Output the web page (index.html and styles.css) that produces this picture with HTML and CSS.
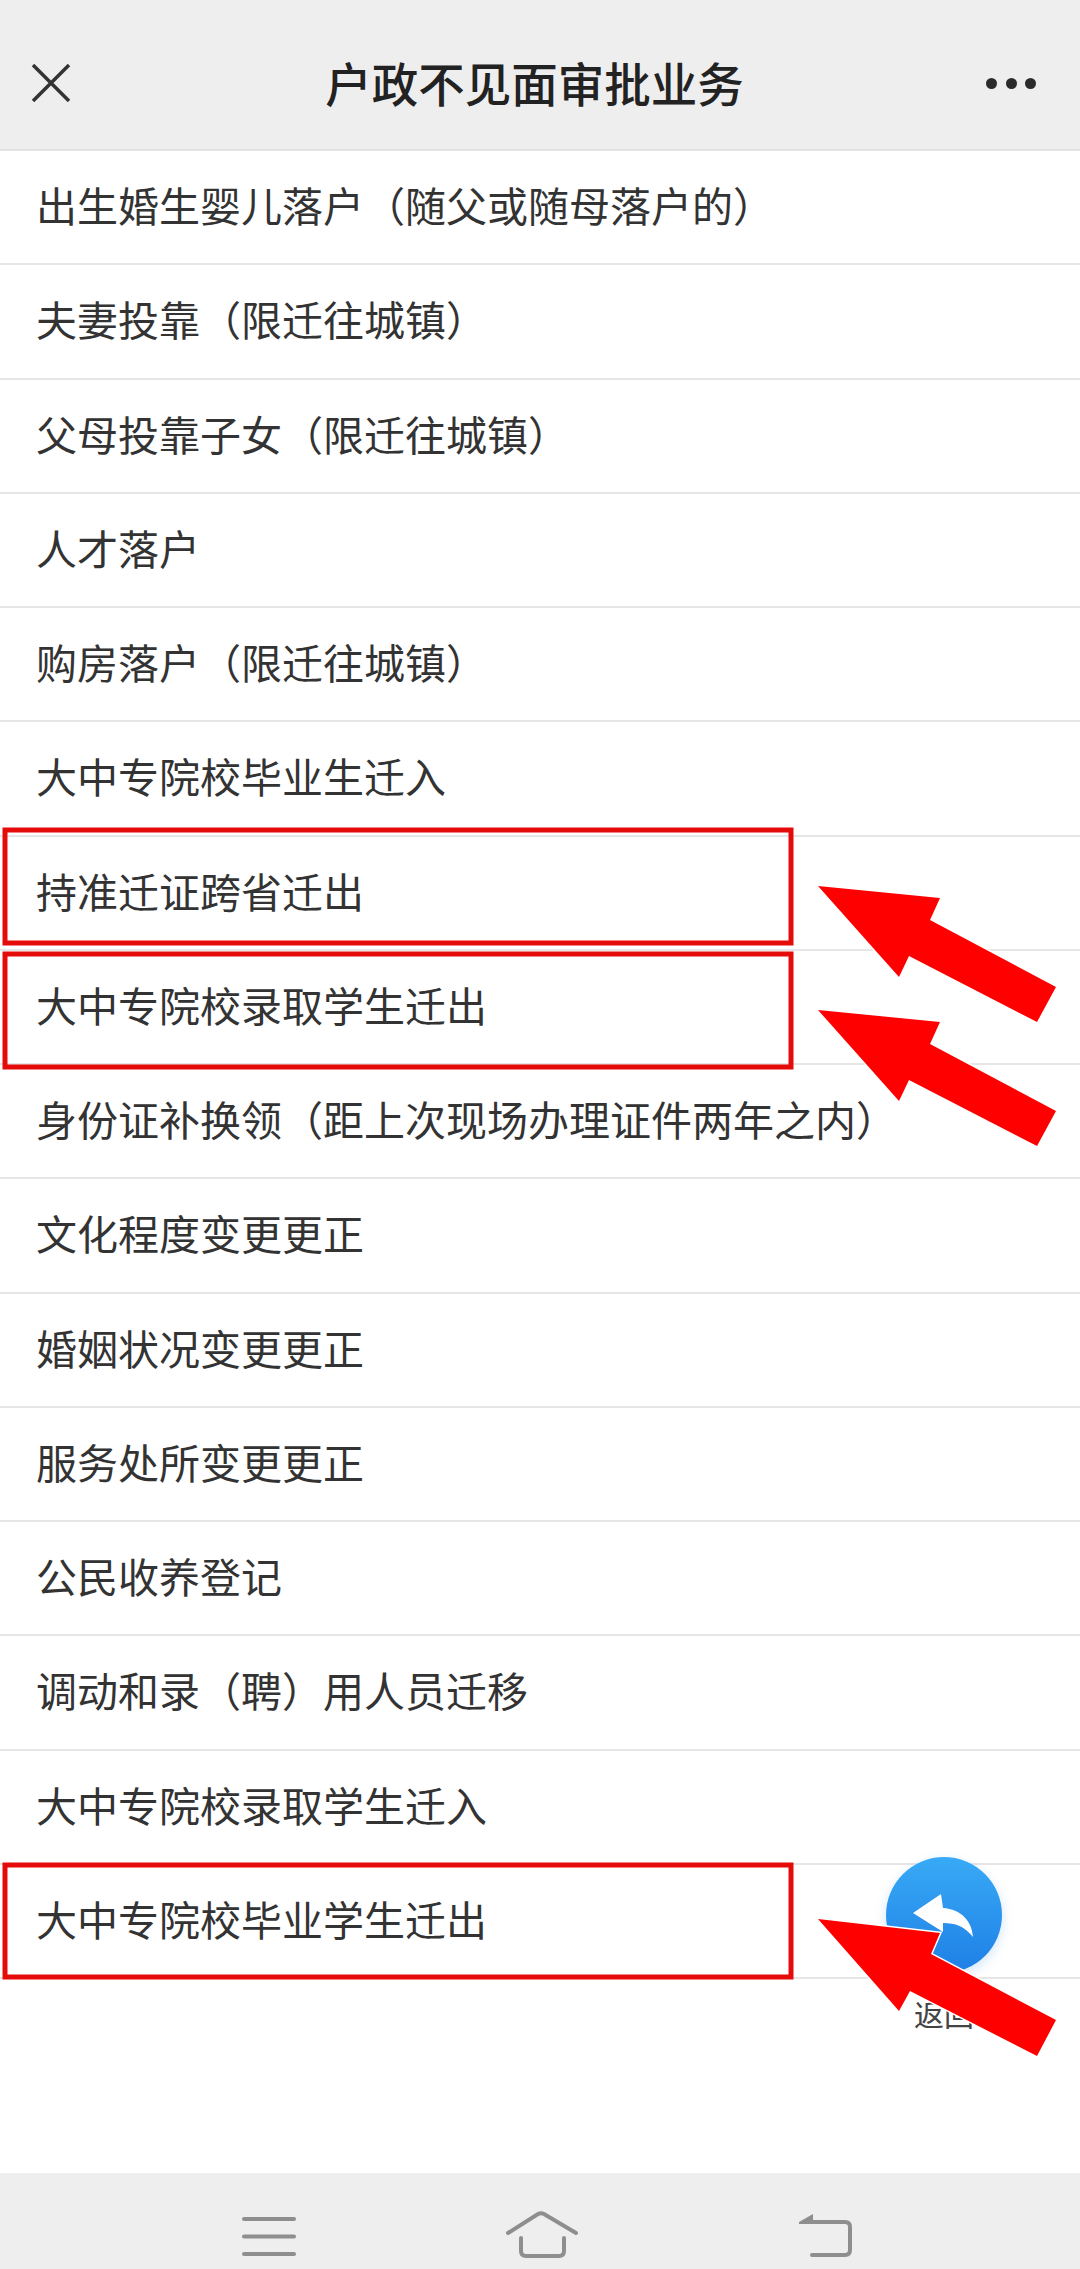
FILE: index.html
```html
<!DOCTYPE html>
<html lang="zh-CN">
<head>
<meta charset="utf-8">
<title>户政不见面审批业务</title>
<link rel="stylesheet" href="styles.css">
</head>
<body>
    <div class="page">
        <div class="topbar">
            <svg class="close-icon" width="40" height="38" viewBox="0 0 40 38">
                <path d="M2 1 L38 37 M38 1 L2 37" />
            </svg>
            <h1 class="title">户政不见面审批业务</h1>
            <div class="more"><span></span><span></span><span></span></div>
        </div>

        <div class="list">
            <div class="row">出生婚生婴儿落户（随父或随母落户的）</div>
            <div class="row">夫妻投靠（限迁往城镇）</div>
            <div class="row">父母投靠子女（限迁往城镇）</div>
            <div class="row">人才落户</div>
            <div class="row">购房落户（限迁往城镇）</div>
            <div class="row">大中专院校毕业生迁入</div>
            <div class="row">持准迁证跨省迁出</div>
            <div class="row">大中专院校录取学生迁出</div>
            <div class="row">身份证补换领（距上次现场办理证件两年之内）</div>
            <div class="row">文化程度变更更正</div>
            <div class="row">婚姻状况变更更正</div>
            <div class="row">服务处所变更更正</div>
            <div class="row">公民收养登记</div>
            <div class="row">调动和录（聘）用人员迁移</div>
            <div class="row">大中专院校录取学生迁入</div>
            <div class="row">大中专院校毕业学生迁出</div>
        </div>

        <div class="bottombar">
            <svg class="nav-icon" width="56" height="44" viewBox="0 0 56 44">
                <path d="M3 5 H53 M3 22.500 H53 M3 40 H53" />
            </svg>
            <svg class="nav-icon nav-home" width="76" height="50" viewBox="0 0 76 50">
                <path d="M4 22 L34 3 Q37 1.500 40 3 L72 22" />
                <path d="M17 27 V40 Q17 45 22 45 H55 Q60 45 60 40 V27" />
            </svg>
            <svg class="nav-icon nav-back" width="60" height="46" viewBox="0 0 60 46">
                <path class="fill" d="M2 9 L16 1 V11 H2 Z" />
                <path d="M8 9 H48 Q53 9 53 14 V37 Q53 42 48 42 H15" />
            </svg>
        </div>

        <div class="fab">
            <div class="fab-circle">
                <svg width="116" height="116" viewBox="0 0 116 116">
                    <path d="M27 56 L55 37 L57 51 C75 52 86 64 87 80 C78 69 70 66 57 66 L57 75 Z" />
                </svg>
            </div>
            <div class="fab-label">返回</div>
        </div>

        <!-- red markup drawn on top of the screenshot -->
        <svg class="markup" width="1080" height="2269" viewBox="0 0 1080 2269">
            <rect class="box" x="5" y="830" width="786" height="113" />
            <rect class="box" x="5" y="954" width="786" height="113" />
            <rect class="box" x="5" y="1865" width="786" height="112" />
            <polygon class="arrow" points="818,886 940,898 930,920 1056,987 1037,1022 909,956 899,977" />
            <polygon class="arrow" points="818,1010 940,1022 930,1044 1056,1111 1037,1146 909,1080 899,1101" />
            <polygon class="arrow" points="818,1919 940,1933 931,1954 1056,2020 1037,2056 910,1991 899,2011" />
        </svg>
    </div>
</body>
</html>
```

FILE: styles.css
```css
* {
    box-sizing: border-box;
}

body {
    margin: 0;
    background-color: #fff;
    font-family: "Noto Sans CJK SC", "Liberation Sans", sans-serif;
    color: #333;
}

.page {
    position: relative;
    width: 1080px;
    height: 2269px;
    display: flex;
    flex-direction: column;
    overflow: hidden;
}

.topbar {
    height: 151px;
    flex: none;
    display: flex;
    align-items: center;
    justify-content: space-between;
    padding: 15px 44px 0 31px;
    background-color: #eee;
    border-bottom: 2px solid #e2e2e2;
}

.close-icon {
    margin-top: 2px;
}

.close-icon path {
    fill: none;
    stroke: #333;
    stroke-width: 3.5;
}

.title {
    margin: 0 0 0 12px;
    font-size: 46.500px;
    font-weight: 500;
    line-height: 60px;
    color: #222;
}

.more {
    display: flex;
    gap: 8.500px;
    margin-top: 2px;
}

.more span {
    width: 11px;
    height: 11px;
    border-radius: 50%;
    background-color: #2b2b2b;
}

.list {
    flex: 1;
}

.row {
    height: 114.25px;
    display: flex;
    align-items: center;
    padding: 0 0 6px 36px;
    font-size: 41px;
    border-bottom: 2px solid #e6e6e6;
}

.bottombar {
    height: 96px;
    flex: none;
    display: flex;
    align-items: center;
    padding: 30px 0 0 241px;
    background-color: #eee;
}

.nav-home {
    margin-left: 207px;
}

.nav-back {
    margin-left: 217px;
}

.nav-icon path {
    fill: none;
    stroke: #8e8e8e;
    stroke-width: 4;
    stroke-linecap: round;
}

.nav-icon path.fill {
    fill: #8e8e8e;
    stroke: none;
}

.fab {
    position: absolute;
    left: 886px;
    top: 1857px;
    width: 116px;
    text-align: center;
}

.fab-circle {
    width: 116px;
    height: 116px;
    border-radius: 50%;
    background: linear-gradient(#38aaf6, #1e7fe5);
    box-shadow: 0 4px 12px rgba(30, 127, 229, 0.2);
}

.fab-circle path {
    fill: #fff;
}

.fab-label {
    margin-top: 20px;
    font-size: 30px;
    line-height: 40px;
    color: #444;
}

.markup {
    position: absolute;
    left: 0;
    top: 0;
}

.box {
    fill: none;
    stroke: #e60b0b;
    stroke-width: 5;
}

.arrow {
    fill: #f00;
    stroke: #fff;
    stroke-width: 3;
    paint-order: stroke;
}
```
